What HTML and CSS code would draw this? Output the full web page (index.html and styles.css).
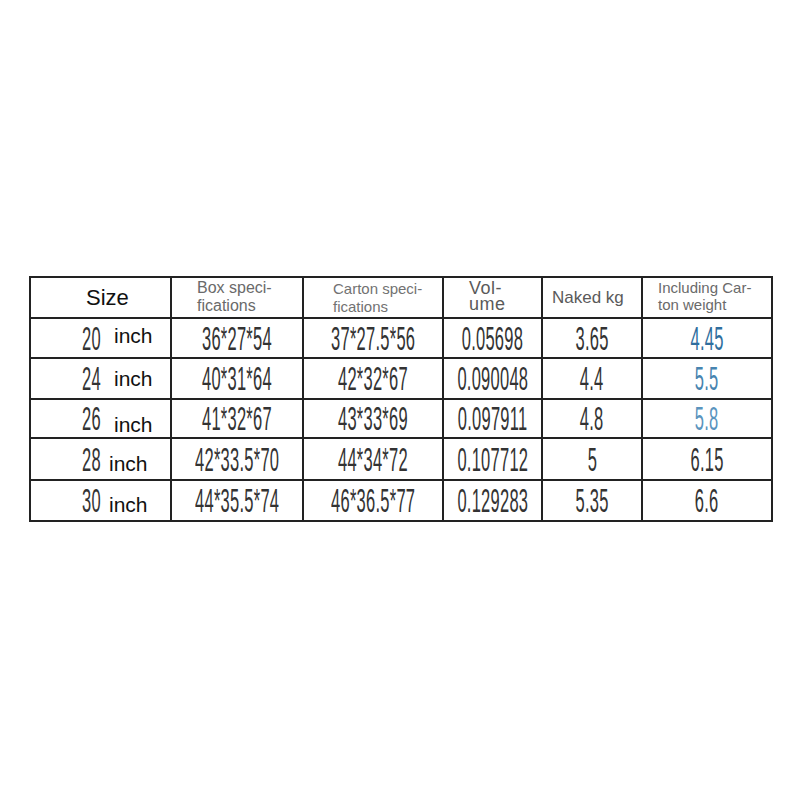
FILE: index.html
```html
<!DOCTYPE html>
<html>
<head>
<meta charset="utf-8">
<link rel="stylesheet" href="styles.css">
</head>
<body>
<table class="spec">
  <colgroup>
    <col class="c1"><col class="c2"><col class="c3"><col class="c4"><col class="c5"><col class="c6">
  </colgroup>
  <tr class="head">
    <th class="h-size">Size</th>
    <th class="h-box">Box speci-<br>fications</th>
    <th class="h-carton">Carton speci-<br>fications</th>
    <th class="h-vol">Vol-<br>ume</th>
    <th class="h-naked">Naked kg</th>
    <th class="h-incl">Including Car-<br>ton weight</th>
  </tr>
  <tr class="r1">
    <td class="size"><span class="szn"><span class="cn">20</span></span><span class="inch wide up">inch</span></td>
    <td><div class="cell"><span class="cn">36*27*54</span></div></td>
    <td><div class="cell"><span class="cn">37*27.5*56</span></div></td>
    <td><div class="cell"><span class="cn">0.05698</span></div></td>
    <td><div class="cell"><span class="cn">3.65</span></div></td>
    <td><div class="cell"><span class="cn blue1">4.45</span></div></td>
  </tr>
  <tr class="r2">
    <td class="size"><span class="szn"><span class="cn">24</span></span><span class="inch wide up2">inch</span></td>
    <td><div class="cell"><span class="cn">40*31*64</span></div></td>
    <td><div class="cell"><span class="cn">42*32*67</span></div></td>
    <td><div class="cell"><span class="cn">0.090048</span></div></td>
    <td><div class="cell"><span class="cn">4.4</span></div></td>
    <td><div class="cell"><span class="cn blue2">5.5</span></div></td>
  </tr>
  <tr class="r3">
    <td class="size"><span class="szn"><span class="cn">26</span></span><span class="inch wide down">inch</span></td>
    <td><div class="cell"><span class="cn">41*32*67</span></div></td>
    <td><div class="cell"><span class="cn">43*33*69</span></div></td>
    <td><div class="cell"><span class="cn">0.097911</span></div></td>
    <td><div class="cell"><span class="cn">4.8</span></div></td>
    <td><div class="cell"><span class="cn blue3">5.8</span></div></td>
  </tr>
  <tr class="r4">
    <td class="size"><span class="szn"><span class="cn">28</span></span><span class="inch">inch</span></td>
    <td><div class="cell"><span class="cn">42*33.5*70</span></div></td>
    <td><div class="cell"><span class="cn">44*34*72</span></div></td>
    <td><div class="cell"><span class="cn">0.107712</span></div></td>
    <td><div class="cell"><span class="cn">5</span></div></td>
    <td><div class="cell"><span class="cn">6.15</span></div></td>
  </tr>
  <tr class="r5">
    <td class="size"><span class="szn"><span class="cn">30</span></span><span class="inch">inch</span></td>
    <td><div class="cell"><span class="cn">44*35.5*74</span></div></td>
    <td><div class="cell"><span class="cn">46*36.5*77</span></div></td>
    <td><div class="cell"><span class="cn">0.129283</span></div></td>
    <td><div class="cell"><span class="cn">5.35</span></div></td>
    <td><div class="cell"><span class="cn">6.6</span></div></td>
  </tr>
</table>
</body>
</html>
```
FILE: styles.css
```css
html, body {
  margin: 0;
  padding: 0;
  background: #ffffff;
}

body {
  font-family: "Liberation Sans", Arial, sans-serif;
}

.spec {
  margin-top: 276px;
  margin-left: 29px;
  width: 742px;
  border-collapse: collapse;
  table-layout: fixed;
}

.c1 { width: 141px; }
.c2 { width: 132px; }
.c3 { width: 140px; }
.c4 { width: 99px; }
.c5 { width: 100px; }
.c6 { width: 130px; }

.spec th,
.spec td {
  border: 2px solid #222222;
  padding: 0;
  vertical-align: middle;
  text-align: center;
  font-weight: normal;
  white-space: nowrap;
}

.head { height: 41px; }
.r1 { height: 40px; }
.r2 { height: 41px; }
.r3 { height: 39px; }
.r4 { height: 42px; }
.r5 { height: 41px; }

/* header cells */
.spec th {
  color: #6a6a6a;
  text-align: left;
}

.spec th.h-size {
  color: #111111;
  font-size: 22px;
  padding-left: 55px;
}

.spec th.h-box {
  font-size: 16px;
  line-height: 18px;
  padding-left: 25px;
  padding-bottom: 1px;
}

.spec th.h-carton {
  font-size: 15px;
  line-height: 18px;
  padding-left: 29px;
  color: #727272;
}

.spec th.h-vol {
  font-size: 18px;
  line-height: 16px;
  letter-spacing: 0.5px;
  padding-left: 25px;
  padding-bottom: 4px;
  color: #5a5a5a;
}

.spec th.h-naked {
  font-size: 17px;
  padding-left: 9px;
  color: #5a5a5a;
}

.spec th.h-incl {
  font-size: 15px;
  line-height: 17px;
  padding-left: 15px;
  padding-bottom: 4px;
}

/* condensed numbers */
.cell {
  display: flex;
  justify-content: center;
  align-items: center;
}

.cn {
  display: inline-block;
  flex-shrink: 0;
  font-size: 33px;
  line-height: 1;
  color: #333333;
  transform: scaleX(0.5);
  letter-spacing: 0.5px;
}

.blue1 { color: #2f6e9e; }
.blue2 { color: #4784b0; }
.blue3 { color: #5a94be; }

/* size column */
.spec td.size {
  text-align: left;
  padding-left: 51px;
}

.szn {
  display: inline-block;
  width: 21px;
  white-space: nowrap;
  vertical-align: baseline;
}

.szn .cn {
  transform-origin: left center;
}

.inch {
  display: inline-block;
  font-size: 21px;
  color: #111111;
  margin-left: 6px;
}

.inch.wide { margin-left: 11px; }
.inch.up { position: relative; top: -7px; }
.inch.up2 { position: relative; top: -4px; }
.inch.down { position: relative; top: 2px; }
```
